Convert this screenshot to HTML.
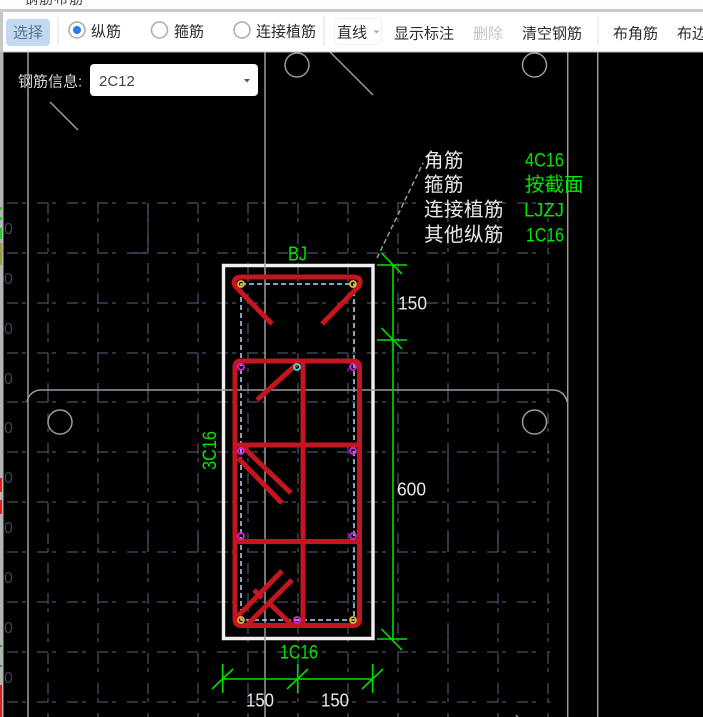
<!DOCTYPE html>
<html lang="zh">
<head>
<meta charset="utf-8">
<style>
html,body{margin:0;padding:0;width:703px;height:717px;overflow:hidden;background:#000}
svg{display:block;position:absolute;left:0;top:0}
.ui{font-family:"Liberation Sans","Noto Sans CJK SC",sans-serif;font-size:15px;fill:#2c2c2c}
.cad{font-family:"Liberation Sans","Noto Sans CJK SC",sans-serif;font-weight:400}
.w{fill:#e8e8e8}
.g{fill:#00e600}
</style>
</head>
<body>
<svg width="703" height="717" viewBox="0 0 703 717" xmlns="http://www.w3.org/2000/svg">
<rect width="703" height="717" fill="#000"/>

<!-- grid -->
<g stroke="#3c4452" stroke-width="1.500" stroke-dasharray="11 4 4 11" fill="none">
<path d="M7 203H550M7 253H550M7 303H550M7 353H550M7 402H550M7 452H550M7 502H550M7 552H550M7 602H550M7 652H550M7 702H550"/>
<path d="M48 203V717M98 203V717M148 203V717M198 203V717M248 203V717M298 203V717M348 203V717M398 203V717M448 203V717M498 203V717M548 203V717"/>
</g>
<g stroke="#3c4452" stroke-width="1.500" fill="none">
<path d="M148 203V253M148 253H130M148 402V390M448 390V402M498 390V402M98 390V402M48 390V402M148 452V477M148 552V530M198 552V530M448 452V477M498 452V477M448 552V530M498 552V530M448 652V630"/>
</g>
<g font-family="Liberation Sans,sans-serif" font-size="16" fill="#3c4452">
<text x="4" y="234">0</text><text x="4" y="284">0</text><text x="4" y="334">0</text><text x="4" y="384">0</text><text x="4" y="433">0</text><text x="4" y="483">0</text><text x="4" y="533">0</text><text x="4" y="583">0</text><text x="4" y="633">0</text><text x="4" y="683">0</text>
</g>

<!-- left strip -->
<rect x="0" y="52" width="3" height="665" fill="#b4b4b4"/>
<rect x="3" y="52" width="1" height="665" fill="#555"/>
<g>
<rect x="0" y="207" width="2" height="3" fill="#20d020"/>
<rect x="0" y="217" width="2" height="3" fill="#20d020"/>
<rect x="0" y="228" width="2" height="11" fill="#20d020"/>
<rect x="0" y="243" width="2" height="22" fill="#a09a40"/>
<rect x="0" y="478" width="2" height="14" fill="#e02020"/>
<rect x="0" y="500" width="2" height="14" fill="#e02020"/>
<rect x="0" y="645" width="2" height="2" fill="#20a020"/>
<rect x="0" y="665" width="2" height="2" fill="#20a020"/>
<rect x="0" y="685" width="2" height="32" fill="#d82020"/>
</g>

<!-- gray CAD lines -->
<g stroke="#9a9a9a" stroke-width="1.500" fill="none">
<path d="M28 52V402M28 402V717"/>
<path d="M265 52V717"/>
<path d="M567.700 52V717M597.700 52V717"/>
<path d="M40 390H553"/>
<path d="M27 402A14 14 0 0 1 40 390M553 390A14 14 0 0 1 567 402"/>
<circle cx="60" cy="422" r="12"/>
<circle cx="534.500" cy="422" r="12"/>
<circle cx="297" cy="65" r="12"/>
<circle cx="534.500" cy="65" r="12"/>
<path d="M50 102L78 130M330 52L373 95"/>
<path d="M377 258L423 163" stroke-dasharray="5 3"/>
<path d="M516 715L522 722"/>
</g>

<!-- light blue dashed stirrup -->
<path d="M241 284H354V620H241Z" fill="none" stroke="#b0d8f8" stroke-width="1.500" stroke-dasharray="5 3"/>

<!-- white outline -->
<path d="M223.500 265.500H373V638.500H223.500Z" fill="none" stroke="#f0f0f0" stroke-width="3.400"/>
<path d="M265 264V268M265 636V640M222 390H375" stroke="#8a8a8a" stroke-width="1.200"/>

<!-- rebar -->
<g fill="none" stroke="#c4161e" stroke-width="5" stroke-linejoin="round" stroke-linecap="butt">
<path d="M272 324L235 286Q232 277 242 277H353Q363 277 359 286L322 324"/>
<path d="M241 361H353Q359.500 361 359.500 367V619Q359.500 625.500 353 625.500H241Q235 625.500 235 619V367Q235 361 241 361Z"/>
<path d="M303 361V625M235 445H359M235 541.500H359"/>
<path d="M298 363L257 400"/>
<path d="M243 447L291 493M238 458L282 503"/>
<path d="M282 571L237 617M292 580L245 627M268 602L292 625"/>
<path d="M254 590L262 598"/>
</g>

<!-- points -->
<g fill="none" stroke-width="1.800">
<g stroke="#e8b820"><circle cx="241" cy="284" r="3"/><circle cx="353" cy="284" r="3"/><circle cx="241" cy="620" r="3"/><circle cx="353" cy="620" r="3"/></g>
<g stroke="#e020e0"><circle cx="241" cy="367" r="3"/><circle cx="353" cy="367" r="3"/><circle cx="241" cy="451" r="3"/><circle cx="353" cy="451" r="3"/><circle cx="241" cy="536" r="3"/><circle cx="353" cy="536" r="3"/><circle cx="297" cy="620" r="3"/></g>
<g stroke="#30e0e0"><circle cx="297" cy="367" r="3"/></g>
</g>

<!-- green dims -->
<g stroke="#00e000" stroke-width="1.600" fill="none">
<path d="M393 265V640"/>
<path d="M377 265H407M377 340H407M377 639H407"/>
<path d="M381.500 253L402 274M381.500 328L402 349M381.500 629L402 650"/>
<path d="M223 679H373"/>
<path d="M222.700 664V693M297.700 664V693M372.700 664V693"/>
<path d="M212 689L233 669M287 689L308 669M362 689L383 669"/>
</g>

<!-- CAD text -->
<g class="cad">
<text x="424" y="167" font-size="19.500" letter-spacing=".5" class="w cad">角筋</text>
<text x="424" y="191" font-size="19.500" letter-spacing=".5" class="w cad">箍筋</text>
<text x="424" y="216" font-size="19.500" letter-spacing=".5" class="w cad">连接植筋</text>
<text x="424" y="241" font-size="19.500" letter-spacing=".5" class="w cad">其他纵筋</text>
<text x="525" y="166.500" font-size="19" textLength="39" lengthAdjust="spacingAndGlyphs" class="g cad">4C16</text>
<text x="525" y="191" font-size="19.500" class="g cad">按截面</text>
<text x="524" y="216.500" font-size="19" textLength="40" lengthAdjust="spacingAndGlyphs" class="g cad">LJZJ</text>
<text x="526" y="241.500" font-size="19" textLength="38" lengthAdjust="spacingAndGlyphs" class="g cad">1C16</text>
<text x="288" y="260.500" font-size="20" textLength="19" lengthAdjust="spacingAndGlyphs" class="g cad">BJ</text>
<text x="280" y="658.500" font-size="19" textLength="38" lengthAdjust="spacingAndGlyphs" class="g cad">1C16</text>
<text x="0" y="0" font-size="19" textLength="39" lengthAdjust="spacingAndGlyphs" class="g cad" transform="translate(216,470) rotate(-90)">3C16</text>
<text x="398" y="309.500" font-size="18" textLength="29" lengthAdjust="spacingAndGlyphs" class="w cad">150</text>
<text x="397" y="495.500" font-size="18" textLength="29" lengthAdjust="spacingAndGlyphs" class="w cad">600</text>
<text x="246" y="706.500" font-size="18" textLength="28" lengthAdjust="spacingAndGlyphs" class="w cad">150</text>
<text x="321" y="706.500" font-size="18" textLength="28" lengthAdjust="spacingAndGlyphs" class="w cad">150</text>
</g>

<!-- top bars -->
<rect x="0" y="0" width="703" height="9" fill="#fdfdfd"/>
<text x="24" y="4" font-family="Liberation Sans,Noto Sans CJK SC,sans-serif" font-size="14" fill="#444" letter-spacing="1">钢筋布筋</text>
<rect x="0" y="9" width="703" height="3" fill="#c8ccd0"/>
<rect x="0" y="12" width="3" height="40" fill="#c8c8c8"/>
<rect x="3" y="12" width="700" height="40" fill="#fff"/>
<rect x="3" y="51.500" width="700" height="1" fill="#bbb"/>

<!-- toolbar -->
<rect x="6" y="19" width="44" height="27" rx="4" fill="#c2d9f1"/>
<text x="13" y="37.500" class="ui" style="fill:#5a7088">选择</text>
<rect x="57.500" y="16" width="1" height="30" fill="#e2e2e2"/>
<circle cx="77" cy="30" r="8" fill="#fff" stroke="#aaa" stroke-width="1.500"/>
<circle cx="77" cy="30" r="4" fill="#2a7fe0"/>
<text x="91" y="36.500" class="ui">纵筋</text>
<circle cx="159.500" cy="30" r="8" fill="#fff" stroke="#aaa" stroke-width="1.500"/>
<text x="174" y="36.500" class="ui">箍筋</text>
<circle cx="242" cy="30" r="8" fill="#fff" stroke="#aaa" stroke-width="1.500"/>
<text x="256" y="36.500" class="ui">连接植筋</text>
<rect x="323.500" y="16" width="1" height="30" fill="#e2e2e2"/>
<rect x="334.500" y="18.500" width="47" height="26" rx="3" fill="#fff" stroke="#f0f0f0"/>
<text x="337" y="37.500" class="ui">直线</text>
<path d="M373.500 30.500h6l-3 3z" fill="#aaa"/>
<text x="394" y="38.500" class="ui">显示标注</text>
<text x="473" y="38.500" class="ui" style="fill:#c4c4c4">删除</text>
<text x="522" y="38.500" class="ui">清空钢筋</text>
<rect x="597.500" y="16" width="1" height="30" fill="#e2e2e2"/>
<text x="613" y="38.500" class="ui">布角筋</text>
<text x="677" y="38.500" class="ui">布边筋</text>

<!-- rebar info panel -->
<text x="18" y="86.500" class="ui" style="fill:#d8d8d8">钢筋信息:</text>
<rect x="90" y="64" width="168" height="32" rx="4" fill="#fff"/>
<text x="99" y="86" font-family="Liberation Sans,sans-serif" font-size="15" fill="#444">2C12</text>
<path d="M244 79h6l-3 3.500z" fill="#555"/>
</svg>
</body>
</html>
